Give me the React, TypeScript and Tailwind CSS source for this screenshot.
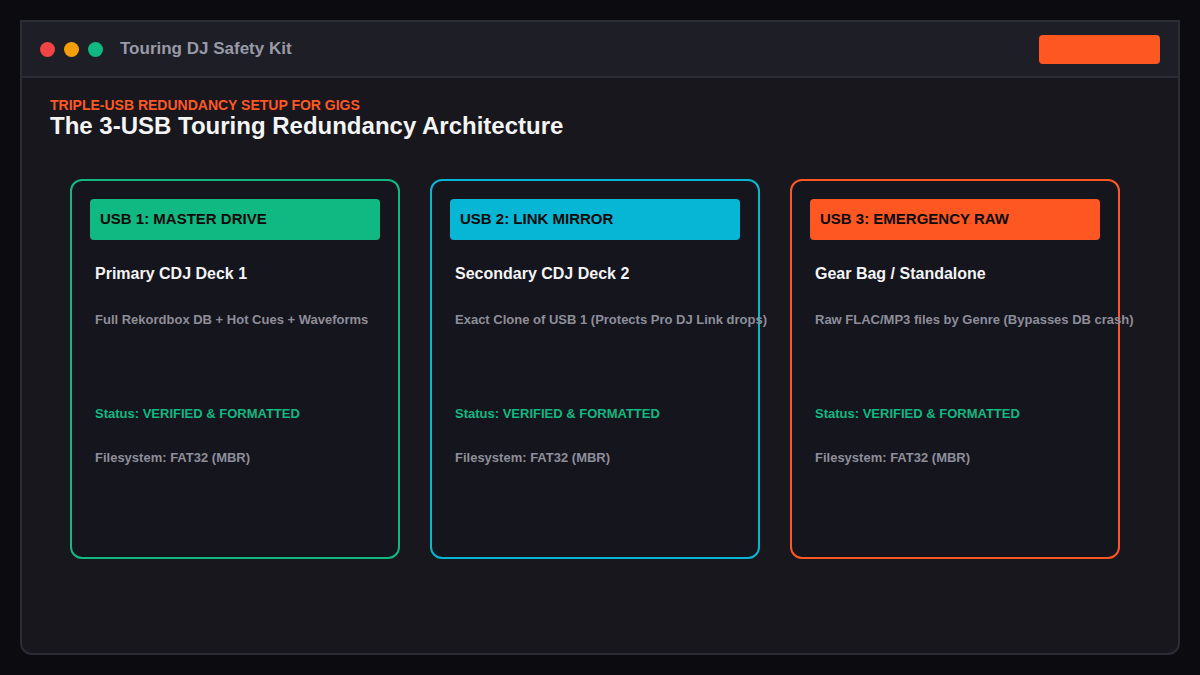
import React from "react";

const cards = [
  { label: "USB 1: MASTER DRIVE", title: "Primary CDJ Deck 1", desc: "Full Rekordbox DB + Hot Cues + Waveforms", border: "border-[#10b981]", bg: "bg-[#10b981]" },
  { label: "USB 2: LINK MIRROR", title: "Secondary CDJ Deck 2", desc: "Exact Clone of USB 1 (Protects Pro DJ Link drops)", border: "border-[#06b6d4]", bg: "bg-[#06b6d4]" },
  { label: "USB 3: EMERGENCY RAW", title: "Gear Bag / Standalone", desc: "Raw FLAC/MP3 files by Genre (Bypasses DB crash)", border: "border-[#ff5722]", bg: "bg-[#ff5722]" },
];

export default function App() {
  return (
    <div className="w-[1200px] h-[675px] bg-[#0c0c10] pt-5 px-5 overflow-hidden" style={{ fontFamily: '"Liberation Sans", Arial, sans-serif' }}>
      <div className="w-[1160px] h-[635px] bg-[#17171d] border-2 border-[#2c2c36] rounded-b-[12px] flex flex-col overflow-hidden">
        <div className="h-[56px] bg-[#1e1e26] border-b-2 border-[#2c2c36] flex items-center pl-[18px] pr-[18px] shrink-0">
          <div className="flex gap-[9px]">
            <span className="w-[15px] h-[15px] rounded-full bg-[#ef4444]" />
            <span className="w-[15px] h-[15px] rounded-full bg-[#f59e0b]" />
            <span className="w-[15px] h-[15px] rounded-full bg-[#10b981]" />
          </div>
          <span className="ml-[17px] text-[17px] font-bold text-[#9a9aa6]">Touring DJ Safety Kit</span>
          <div className="ml-auto w-[121px] h-[29px] bg-[#ff5722] rounded-[4px]" />
        </div>
        <div className="pl-[28px] pt-[19px]">
          <div className="text-[14px] font-bold text-[#ff5722] leading-[16px]">TRIPLE-USB REDUNDANCY SETUP FOR GIGS</div>
          <div className="text-[24px] font-bold text-[#f4f4f6] leading-[26px]">The 3-USB Touring Redundancy Architecture</div>
          <div className="flex gap-[30px] mt-[40px] ml-[20px]">
            {cards.map((c) => (
              <div key={c.label} className={`w-[330px] h-[380px] border-2 ${c.border} rounded-[12px] bg-[#15151d] pt-[18px] px-[18px]`}>
                <div className={`${c.bg} h-[41px] rounded-[4px] flex items-center pl-[10px] text-[15px] font-bold text-[#0a0a0a]`}>{c.label}</div>
                <div className="mt-[22px] pl-[5px] text-[16px] font-bold text-[#f4f4f6]">{c.title}</div>
                <div className="mt-[24px] pl-[5px] text-[13px] font-bold text-[#8e8e9a] whitespace-nowrap">{c.desc}</div>
                <div className="mt-[74px] pl-[5px] text-[13px] font-bold text-[#10b981]">Status: VERIFIED &amp; FORMATTED</div>
                <div className="mt-[25px] pl-[5px] text-[13px] font-bold text-[#8e8e9a]">Filesystem: FAT32 (MBR)</div>
              </div>
            ))}
          </div>
        </div>
      </div>
    </div>
  );
}
